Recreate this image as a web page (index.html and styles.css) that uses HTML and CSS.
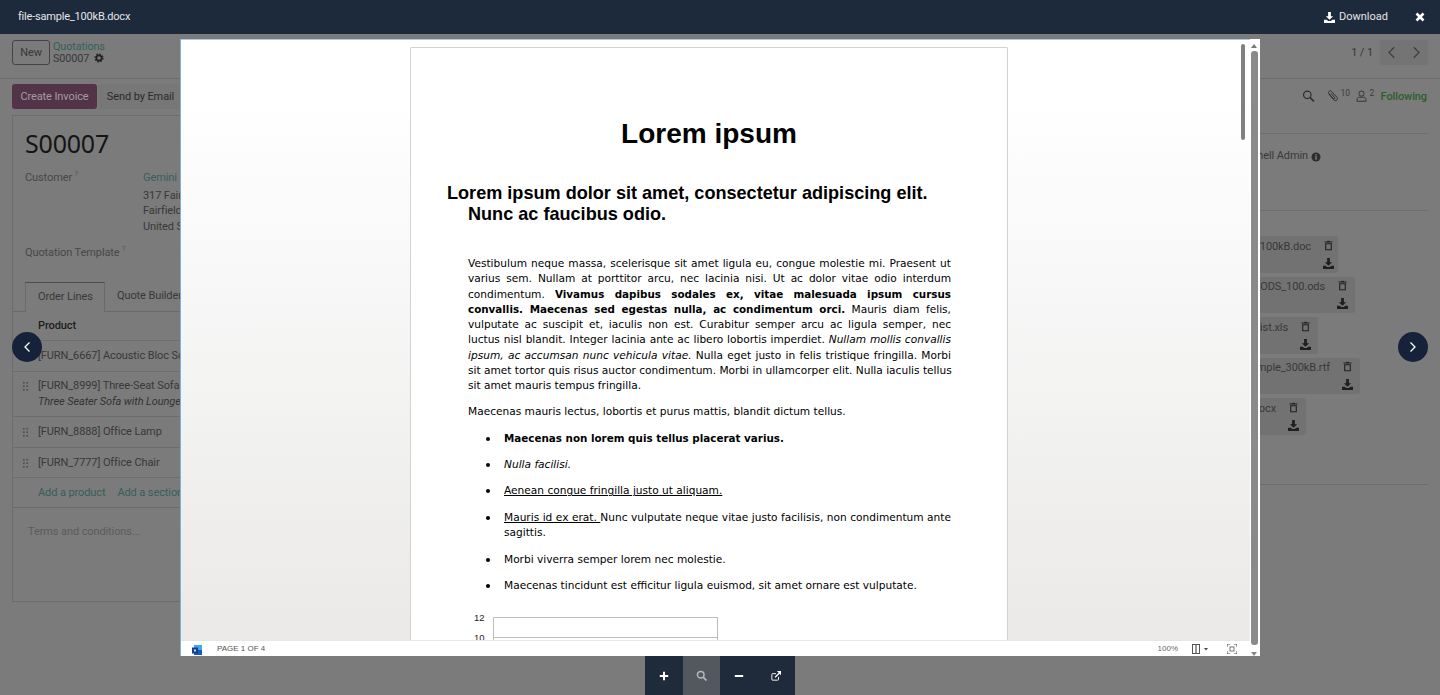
FILE: index.html
```html
<!DOCTYPE html>
<html lang="en">
<head>
<meta charset="utf-8">
<title>file-sample_100kB.docx</title>
<link rel="stylesheet" href="styles.css">
</head>
<body>
<div class="app">
  <div class="panel">
    <button class="btn-new">New</button>
    <div class="crumbs">
      <a class="link">Quotations</a>
      <div class="crumb-cur">S00007
        <svg class="gear" viewBox="0 0 12 12"><circle cx="6" cy="6" r="3.2" fill="none" stroke="#222" stroke-width="2"/><circle cx="6" cy="6" r="4.6" fill="none" stroke="#222" stroke-width="1.8" stroke-dasharray="1.8 1.8"/></svg>
      </div>
    </div>
    <div class="pager">
      <span class="pager-text">1 / 1</span>
      <div class="pager-btns">
        <svg viewBox="0 0 24 24" class="pg"><path d="M15 5l-7 7 7 7" fill="none" stroke="#3d3d3d" stroke-width="1.6"/></svg>
        <svg viewBox="0 0 24 24" class="pg"><path d="M9 5l7 7-7 7" fill="none" stroke="#3d3d3d" stroke-width="1.6"/></svg>
      </div>
    </div>
  </div>
  <div class="content">
    <div class="form-col">
      <div class="actions">
        <button class="btn-primary">Create Invoice</button>
        <button class="btn-sec">Send by Email</button>
      </div>
      <div class="sheet">
        <h1 class="title">S00007</h1>
        <div class="field-row">
          <div class="label">Customer <sup>?</sup></div>
          <div class="addr"><a class="link addr-name">Gemini Furniture</a><span>317 Fairchild Dr</span><span>Fairfield CA 94535</span><span>United States</span></div>
        </div>
        <div class="label tmpl">Quotation Template <sup>?</sup></div>
        <div class="tabs">
          <div class="tab active">Order Lines</div>
          <div class="tab">Quote Builder</div>
        </div>
        <div class="thead">Product</div>
        <div class="row r1"><span>[FURN_6667] Acoustic Bloc Screens</span></div>
        <div class="row r2"><i class="grip"></i><div><span>[FURN_8999] Three-Seat Sofa</span><em>Three Seater Sofa with Lounger</em></div></div>
        <div class="row r3"><i class="grip"></i><span>[FURN_8888] Office Lamp</span></div>
        <div class="row r4"><i class="grip"></i><span>[FURN_7777] Office Chair</span></div>
        <div class="row add"><a class="link">Add a product</a><a class="link">Add a section</a></div>
        <div class="terms">Terms and conditions...</div>
      </div>
    </div>
    <aside class="chatter">
      <div class="chat-top">
        <svg class="ic15" viewBox="0 0 16 16"><circle cx="6.5" cy="6.5" r="4.6" fill="none" stroke="#2e2e2e" stroke-width="1.5"/><path d="M10 10l4.6 4.6" stroke="#2e2e2e" stroke-width="2"/></svg>
        <span class="cnt clip"><svg class="ic15" viewBox="0 0 16 16"><path d="M3.200 5.200l6.300 7.600c1 1.200 2.600 1.400 3.700.5 1.100-.9 1.200-2.500.2-3.700L6.800 2.300C6 1.400 4.800 1.200 3.900 2c-.9.700-1 2-.3 2.900l5.500 6.600c.4.500 1 .6 1.500.2.500-.4.500-1 .1-1.500L6.200 4.600" fill="none" stroke="#2e2e2e" stroke-width="1.150"/></svg><sup>10</sup></span>
        <span class="cnt user"><svg class="ic15" viewBox="0 0 16 16"><circle cx="8" cy="5" r="3.200" fill="none" stroke="#2e2e2e" stroke-width="1.100"/><path d="M2.500 14.500v-2c0-2 1.500-3 3-3h5c1.500 0 3 1 3 3v2z" fill="none" stroke="#2e2e2e" stroke-width="1.100"/></svg><sup>2</sup></span>
        <span class="following">Following</span>
      </div>
      <div class="chat-user">Mitchell Admin
        <svg class="info" viewBox="0 0 10 10"><circle cx="5" cy="5" r="4.500" fill="#2e2e2e"/><rect x="4.300" y="4.200" width="1.500" height="3.500" fill="#7b7b7b"/><rect x="4.300" y="2.200" width="1.500" height="1.300" fill="#7b7b7b"/></svg>
      </div>
      <div class="files">
        <div class="file f1"><span class="fname">file-sample_100kB.doc</span><svg class="trash" viewBox="0 0 10 11"><use href="#i-trash"/></svg><svg class="dl" viewBox="0 0 12 12"><use href="#i-dl"/></svg></div>
        <div class="file f2"><span class="fname">Sample_ODS_100.ods</span><svg class="trash" viewBox="0 0 10 11"><use href="#i-trash"/></svg><svg class="dl" viewBox="0 0 12 12"><use href="#i-dl"/></svg></div>
        <div class="file f3"><span class="fname">pricelist.xls</span><svg class="trash" viewBox="0 0 10 11"><use href="#i-trash"/></svg><svg class="dl" viewBox="0 0 12 12"><use href="#i-dl"/></svg></div>
        <div class="file f4"><span class="fname">file-sample_300kB.rtf</span><svg class="trash" viewBox="0 0 10 11"><use href="#i-trash"/></svg><svg class="dl" viewBox="0 0 12 12"><use href="#i-dl"/></svg></div>
        <div class="file f5"><span class="fname">file.docx</span><svg class="trash" viewBox="0 0 10 11"><use href="#i-trash"/></svg><svg class="dl" viewBox="0 0 12 12"><use href="#i-dl"/></svg></div>
      </div>
      <div class="chat-end"></div>
    </aside>
  </div>
</div>

<svg class="defs" aria-hidden="true">
  <symbol id="i-trash" viewBox="0 0 10 11"><path d="M3.500 1V.3h3V1H9.500v1.300H.5V1zM1.300 3h7.400v8H1.300zM2.500 4v5.800h5V4z" fill="#1f1f1f" fill-rule="evenodd"/></symbol>
  <symbol id="i-dl" viewBox="0 0 12 12"><path d="M4.500 0h3v4.500H10L6 8.500 2 4.500h2.500zM0 8.500h3l1.500 1.300h3L9 8.500h3V12H0z" fill="#1f1f1f"/></symbol>
</svg>

<div class="viewer">
  <header class="vbar">
    <span class="vname">file-sample_100kB.docx</span>
    <a class="vdl"><svg class="vdl-ic" viewBox="0 0 12 12"><path d="M4.500 0h3v4.500H10L6 8.500 2 4.500h2.500zM0 8.500h3l1.500 1.300h3L9 8.500h3V12H0z" fill="#fff"/></svg>Download</a>
    <svg class="vclose" viewBox="0 0 10 10"><path d="M1.500 1.500l7 7M8.500 1.500l-7 7" stroke="#fff" stroke-width="2.600"/></svg>
  </header>

  <div class="frame">
    <div class="doc-col">
      <div class="doc-area">
        <div class="thumb"></div>
        <article class="page">
          <h1 class="d-title">Lorem ipsum</h1>
          <h2 class="d-head">Lorem ipsum dolor sit amet, consectetur adipiscing elit.<br><span class="d-head2">Nunc ac faucibus odio.</span></h2>
          <div class="d-body">
            <p class="para">
              <span class="jl">Vestibulum neque massa, scelerisque sit amet ligula eu, congue molestie mi. Praesent ut</span>
              <span class="jl">varius sem. Nullam at porttitor arcu, nec lacinia nisi. Ut ac dolor vitae odio interdum</span>
              <span class="jl">condimentum. <b>Vivamus dapibus sodales ex, vitae malesuada ipsum cursus</b></span>
              <span class="jl"><b>convallis. Maecenas sed egestas nulla, ac condimentum orci.</b> Mauris diam felis,</span>
              <span class="jl">vulputate ac suscipit et, iaculis non est. Curabitur semper arcu ac ligula semper, nec</span>
              <span class="jl">luctus nisl blandit. Integer lacinia ante ac libero lobortis imperdiet. <i>Nullam mollis convallis</i></span>
              <span class="jl"><i>ipsum, ac accumsan nunc vehicula vitae.</i> Nulla eget justo in felis tristique fringilla. Morbi</span>
              <span class="jl">sit amet tortor quis risus auctor condimentum. Morbi in ullamcorper elit. Nulla iaculis tellus</span>
              <span class="ll">sit amet mauris tempus fringilla.</span>
            </p>
            <p class="para">Maecenas mauris lectus, lobortis et purus mattis, blandit dictum tellus.</p>
            <ul class="d-list">
              <li><b>Maecenas non lorem quis tellus placerat varius.</b></li>
              <li><i>Nulla facilisi.</i></li>
              <li><u>Aenean congue fringilla justo ut aliquam.</u></li>
              <li><span class="jl"><u>Mauris id ex erat. </u>Nunc vulputate neque vitae justo facilisis, non condimentum ante</span><span class="ll">sagittis.</span></li>
              <li>Morbi viverra semper lorem nec molestie.</li>
              <li>Maecenas tincidunt est efficitur ligula euismod, sit amet ornare est vulputate.</li>
            </ul>
            <div class="chart">
              <div class="axis"><span>12</span><span>10</span></div>
              <div class="plot"><div class="band"></div><div class="band"></div></div>
            </div>
          </div>
        </article>
      </div>
      <footer class="status">
        <svg class="word" viewBox="0 0 10 10"><rect x="2" y="0" width="8" height="9.500" fill="#41a5ee"/><rect x="2" y="5" width="8" height="5" fill="#185abd"/><rect x="0" y="2.500" width="6" height="6" fill="#103f91"/><rect x="2" y="4.500" width="2" height="2" fill="#cfe0f5"/></svg>
        <span class="page-of">PAGE 1 OF 4</span>
        <span class="zoom-pct">100%</span>
        <svg class="st-ic" viewBox="0 0 16 10"><rect x=".5" y=".5" width="7" height="9" fill="none" stroke="#555"/><rect x="3" y="1" width="2" height="8" fill="#999"/><path d="M12 4h4l-2 2.500z" fill="#444"/></svg>
        <svg class="st-fit" viewBox="0 0 10 10"><path d="M0 3V0h3M7 0h3v3M10 7v3H7M3 10H0V7" fill="none" stroke="#444"/><rect x="3" y="3" width="4" height="4" fill="none" stroke="#777"/></svg>
      </footer>
    </div>
    <div class="outer-scroll">
      <i class="arrow up"></i>
      <div class="outer-thumb"></div>
      <i class="arrow down"></i>
    </div>
  </div>

  <div class="tools">
    <button class="tool"><svg viewBox="0 0 10 10"><path d="M5 .8v8.400M.8 5h8.400" stroke="#fff" stroke-width="2"/></svg></button>
    <button class="tool off"><svg viewBox="0 0 10 10"><circle cx="4.300" cy="4.300" r="3" fill="none" stroke="#b5b7ba" stroke-width="1.400"/><path d="M6.500 6.500l3 3" stroke="#b5b7ba" stroke-width="1.500"/></svg></button>
    <button class="tool"><svg viewBox="0 0 10 10"><path d="M.8 5h8.400" stroke="#fff" stroke-width="2"/></svg></button>
    <button class="tool"><svg viewBox="0 0 12 12"><path d="M9 7v3.200c0 .5-.3.800-.8.800H1.800c-.5 0-.8-.3-.8-.8V4c0-.5.3-.8.800-.8H6" fill="none" stroke="#fff" stroke-width="1.100"/><path d="M7 0h5v5l-1.700-1.700-4.800 4.800-1.100-1.100 4.800-4.800z" fill="#fff"/></svg></button>
  </div>

  <button class="nav prev"><svg viewBox="0 0 12 16"><path d="M8.500 3.500L4 8l4.500 4.500" fill="none" stroke="#fff" stroke-width="1.300"/></svg></button>
  <button class="nav next"><svg viewBox="0 0 12 16"><path d="M3.500 3.500L8 8l-4.500 4.500" fill="none" stroke="#fff" stroke-width="1.300"/></svg></button>
</div>
</body>
</html>
```
FILE: styles.css
```css
* { box-sizing: border-box; }
html, body { margin: 0; height: 100%; }
body {
  background: #7b7b7b;
  color: #3f3f3f;
  font: 11px/16px Roboto, "Noto Sans", sans-serif;
  letter-spacing: -.1px;
  overflow: hidden;
}
button { font: inherit; letter-spacing: inherit; border: 0; padding: 0; background: none; color: inherit; }
.defs { width: 0; height: 0; position: absolute; }

/* Dimmed application behind the viewer */
.app { height: 695px; padding-top: 40px; overflow: hidden; }
.panel {
  display: flex; align-items: flex-start; height: 39px;
  padding: 0 12px; border-bottom: 1px solid #6c6c6c;
}
.btn-new {
  width: 38px; height: 25px; border: 1px solid #444; border-radius: 3px;
  color: #383838; margin-right: 3px;
}
.link { color: #33605a; }
.crumbs { display: flex; flex-direction: column; font-size: 10.8px; line-height: 11.5px; padding-top: 1px; }
.crumb-cur { display: flex; align-items: center; gap: 5px; color: #383838; }
.gear { width: 10px; height: 10px; }
.pager { margin-left: auto; display: flex; align-items: center; gap: 7px; }
.pager-text { color: #383838; }
.pager-btns { display: flex; width: 48px; height: 25px; background: #747474; border-radius: 3px; }
.pg { width: 24px; height: 25px; padding: 3px; }

.content { display: grid; grid-template-columns: 1100px 1fr; column-gap: 90px; padding: 0 12px; }
.form-col { display: flex; flex-direction: column; }
.actions { display: flex; align-items: flex-start; height: 36px; padding-top: 5px; }
.btn-primary { width: 85px; height: 25px; border-radius: 3px; background: #533347; color: #a59ca2; }
.btn-sec { width: 85px; height: 25px; background: #777; color: #2a2a2a; border-radius: 3px; margin-left: 1px; }

.sheet {
  height: 487px; border: 1px solid #6d6d6d;
  padding-top: 9px; display: flex; flex-direction: column;
}
.title { margin: 0 0 0 12px; font: 400 25px/36px "Noto Sans", sans-serif; letter-spacing: -.2px; color: #151515; }
.field-row { display: flex; margin: 9px 0 0 12px; }
.label { color: #474747; width: 118px; }
.label sup { font-size: 7px; line-height: 0; color: #555; }
.addr { display: flex; flex-direction: column; line-height: 15.500px; color: #383838; }
.addr-name { margin-bottom: 2px; }
.tmpl { margin: 11px 0 0 12px; width: auto; height: 16px; }
.tabs { display: flex; margin: 21px 0 0 0; padding-left: 12px; height: 30px; border-bottom: 1px solid #6a6a6a; }
.tab { padding: 6px 12px 0; color: #383838; white-space: nowrap; }
.tab.active { border: 1px solid #6a6a6a; border-top-color: #4d4d4d; border-bottom: 0; height: 30px; width: 80px; background: #7b7b7b; }
.thead { height: 29px; padding: 6px 0 0 25px; font-weight: 500; color: #1e1e1e; border-bottom: 1px solid #6e6e6e; }
.row {
  display: flex; align-items: center; padding-left: 25px; border-bottom: 1px solid #6e6e6e;
  color: #383838; position: relative;
}
.row > div { display: flex; flex-direction: column; }
.row em { color: #333; }
.r1 { height: 31px; }
.r2 { height: 45px; }
.r3 { height: 31px; }
.r4 { height: 30px; }
.add { height: 30px; gap: 12px; border-bottom-color: #696969; }
.grip {
  position: absolute; left: 9px; top: 50%; margin-top: -5px; width: 6px; height: 10px;
  background-image: radial-gradient(#4f4f4f 1.100px, transparent 1.200px);
  background-size: 3.500px 3.500px;
}
.r2 .grip { top: 9px; margin-top: 0; }
.terms { padding: 16px 0 0 15px; color: #5c5c5c; font-size: 11px; }

.chatter { display: flex; flex-direction: column; }
.chat-top {
  height: 55px; display: flex; align-items: flex-start; justify-content: flex-end;
  border-bottom: 1px solid #6c6c6c; padding: 10px 1px 0 0;
}
.ic15 { width: 13px; height: 14px; flex: none; }
.cnt { display: inline-flex; align-items: flex-start; }
.cnt sup { font-size: 8.500px; line-height: 9px; margin-left: 2px; top: 0; vertical-align: baseline; color: #3c3c3c; }
.clip { margin-left: 11px; width: 29px; }
.user { width: 26px; }
.following { color: #2c5f2c; font-weight: 500; white-space: nowrap; }
.chat-user {
  height: 77px; padding: 14px 107px 0 0; border-bottom: 1px solid #6c6c6c;
  display: flex; align-items: flex-start; justify-content: flex-end; gap: 3px; color: #383838;
}
.info { width: 10px; height: 10px; margin-top: 4px; }
.files { display: flex; flex-direction: column; gap: 4px; padding-top: 25px; }
.file {
  height: 36.500px; background: #727272; border-radius: 3px; display: grid;
  grid-template-columns: 1fr 26px; grid-template-rows: 18px 18px; align-items: center; justify-items: center;
  color: #383838; overflow: hidden;
}
.fname { justify-self: end; white-space: nowrap; margin-right: 4px; padding-top: 3px; }
.trash { width: 9px; height: 11px; grid-column: 2; grid-row: 1; }
.dl { width: 11px; height: 11px; grid-column: 2; grid-row: 2; }
.f1 { width: 136px; } .f2 { width: 153px; } .f3 { width: 116px; } .f4 { width: 158px; } .f5 { width: 104px; }
.chat-end { height: 50px; border-bottom: 1px solid #6c6c6c; }

/* Viewer overlay */
.viewer { position: fixed; inset: 0; display: flex; flex-direction: column; align-items: center; letter-spacing: 0; }
.vbar {
  width: 100%; height: 34px; flex: none; background: #1d2a3b; color: #e4e6e9;
  display: flex; align-items: center; padding: 0 15px 0 18px;
}
.vname { flex: 1; letter-spacing: -.2px; }
.vdl { display: flex; align-items: center; gap: 4px; margin-right: 27px; }
.vdl-ic { width: 11px; height: 11px; }
.vclose { width: 10px; height: 10px; }

.frame {
  flex: none; margin-top: 5px; width: 1080px; height: 617px; background: #fff;
  display: flex; border-left: 1px solid #7fb0d8;
}
.doc-col { width: 1069px; display: flex; flex-direction: column; border-top: 1px solid #a9cbe6; }
.doc-area {
  flex: 1; min-height: 0; overflow: hidden; position: relative;
  background: linear-gradient(#fff 10%, #ebeae9 96%);
  padding-top: 7px;
}
.thumb { position: absolute; top: 4px; right: 5px; width: 4px; height: 96px; background: #808080; border-radius: 2px; }
.page {
  width: 598px; height: 900px; margin-left: 229px; background: #fff;
  border: 1px solid #d2d2d2; border-radius: 1px; padding-top: 70px;
  color: #000;
}
.d-title { margin: 0; font: 700 28px/32px "Liberation Sans", Arial, sans-serif; text-align: center; }
.d-head { margin: 33px 0 0 36px; font: 700 18.100px/21px "Liberation Sans", Arial, sans-serif; }
.d-head2 { margin-left: 21px; }
.d-body { margin: 31px 56px 0 57px; font: 10.600px/15.250px "DejaVu Sans", Verdana, sans-serif; }
.d-body b { font-size: 10.350px; }
.para { margin: 0 0 11px; }
.jl { display: block; text-align: justify; text-align-last: justify; white-space: nowrap; }
.ll { display: block; }
.d-list { margin: 11px 0 0; padding: 0 0 0 36px; list-style: none; }
.d-list li { margin-bottom: 11.200px; position: relative; }
.d-list li::before {
  content: ""; position: absolute; left: -18px; top: 6px;
  width: 4px; height: 4px; border-radius: 50%; background: #000;
}
.chart { display: flex; margin: 24px 0 0 0; }
.axis { width: 25px; display: flex; flex-direction: column; gap: 5px; font: 9.500px/15px "Liberation Sans", sans-serif; color: #222; padding-left: 6px; margin-top: -7px; }
.plot { width: 225px; border: 1px solid #bdbdbd; }
.band { height: 20px; border-bottom: 1px solid #bdbdbd; }

.status {
  height: 16px; flex: none; background: #fff; border-top: 1px solid #e6e6e6;
  display: flex; align-items: center; color: #555; font: 8px/1 "Liberation Sans", sans-serif;
  padding-left: 11px;
}
.word { width: 10px; height: 10px; margin-top: 2px; }
.page-of { margin-left: 15px; }
.zoom-pct { margin-left: auto; color: #666; }
.st-ic { width: 16px; height: 10px; margin-left: 14px; }
.st-fit { width: 10px; height: 10px; margin: 0 13px 0 19px; }

.outer-scroll { width: 8px; display: flex; flex-direction: column; align-items: center; padding-top: 5px; }
.arrow { width: 0; height: 0; border-left: 3.500px solid transparent; border-right: 3.500px solid transparent; flex: none; }
.arrow.up { border-bottom: 4px solid #777; }
.arrow.down { border-top: 4px solid #888; margin-top: 7px; }
.outer-thumb { width: 7px; flex: 1; margin-top: 3px; background: #8a8a8a; border-radius: 3px; }

.tools { display: flex; height: 39px; flex: none; }
.tool { width: 37.500px; height: 39px; background: #1f2a3a; display: flex; align-items: center; justify-content: center; }
.tool svg { width: 10px; height: 10px; }
.tool.off { background: #53575e; }
.tool.off svg { width: 11px; height: 11px; }

.nav {
  position: absolute; top: 332px; width: 30px; height: 30px; border-radius: 50%;
  background: #16213a; display: flex; align-items: center; justify-content: center;
}
.nav svg { width: 12px; height: 16px; }
.prev { left: 12px; }
.next { right: 12px; }
```
